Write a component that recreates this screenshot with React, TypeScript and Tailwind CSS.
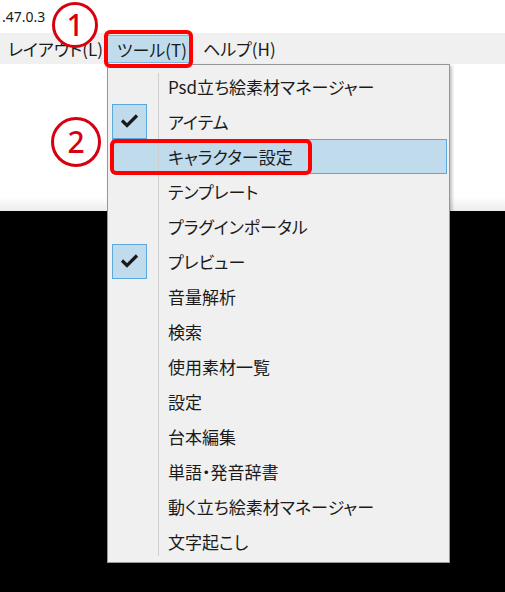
import * as React from "react";

/** Tool menu dropdown with red annotation marks (callouts 1 and 2). */

interface Item {
  label: string;
  checked?: boolean;
  hover?: boolean;
}

const items: Item[] = [
  { label: "Psd立ち絵素材マネージャー" },
  { label: "アイテム", checked: true },
  { label: "キャラクター設定", hover: true },
  { label: "テンプレート" },
  { label: "プラグインポータル" },
  { label: "プレビュー", checked: true },
  { label: "音量解析" },
  { label: "検索" },
  { label: "使用素材一覧" },
  { label: "設定" },
  { label: "台本編集" },
  { label: "単語・発音辞書" },
  { label: "動く立ち絵素材マネージャー" },
  { label: "文字起こし" },
];

function CheckMark() {
  return (
    <svg width="35" height="35" viewBox="0 0 35 35" className="block">
      <path d="M9 15.5 L14 20.5 L24 10.5" fill="none" stroke="#1a1a1a" strokeWidth="3.2" />
    </svg>
  );
}

function MenuRow({ item }: { item: Item }) {
  return (
    <li
      className={
        "relative flex h-[35px] items-center " +
        (item.hover ? "bg-[#c0dcec] outline outline-1 -outline-offset-1 outline-[#5aa8dc]" : "")
      }
    >
      <div
        className={
          "h-[35px] w-[35px] shrink-0 " +
          (item.checked ? "border border-[#5aa8dc] bg-[#c0dcec]" : "")
        }
      >
        {item.checked ? <CheckMark /> : null}
      </div>
      <span className="ml-[21px] whitespace-nowrap text-[17px] leading-none text-[#1b1b1b]">
        {item.label}
      </span>
    </li>
  );
}

export default function App() {
  return (
    <div className="relative h-[592px] w-[505px] overflow-hidden bg-black font-['Noto_Sans_CJK_JP',sans-serif] [font-feature-settings:'palt']">
      {/* window top: title remnant, menu bar, empty client area */}
      <div className="flex h-[211px] flex-col bg-white">
        <div className="flex h-[33px] items-center pl-[2px]">
          <span className="font-['Noto_Sans',sans-serif] text-[14px] leading-none text-[#1a1a1a]">.47.0.3</span>
        </div>
        <div className="flex h-[31px] items-stretch bg-[#f0f0f0] text-[17px] leading-none text-[#1b1b1b]">
          <div className="flex w-[107px] items-center pl-[8px] whitespace-nowrap">レイアウト(L)</div>
          <div className="my-[2px] mb-[1px] flex w-[84px] items-center border border-[#7fb9e2] bg-[#c0dcec] pl-[9px] whitespace-nowrap">
            ツール(T)
          </div>
          <div className="flex items-center pl-[12px] whitespace-nowrap">ヘルプ(H)</div>
        </div>
        <div className="flex-1" />
        <div className="h-[14px] bg-linear-to-b from-white to-[#ececec]" />
      </div>

      {/* dropdown */}
      <div className="absolute left-[107px] top-[64px] h-[499px] w-[343px] border border-[#979797] bg-[#f0f0f0] pb-[3px] pl-[4px] pr-[2px] pt-[4px] shadow-[2px_2px_3px_rgba(0,0,0,0.25)]">
        <ul className="relative">
          {items.map((it) => (
            <MenuRow key={it.label} item={it} />
          ))}
        </ul>
        <div className="pointer-events-none absolute bottom-[6px] left-[50px] top-[8px] w-px bg-[#cfcfcf]" />
      </div>

      {/* annotations */}
      <div className="absolute left-[104px] top-[30px] h-[38px] w-[89px] rounded-[6px] border-4 border-[#ff0000]" />
      <div className="absolute left-[110px] top-[139px] h-[36px] w-[202px] rounded-[6px] border-4 border-[#ff0000]" />
      <div className="absolute left-[52px] top-[2px] flex h-[46px] w-[46px] items-center justify-center rounded-full border-[3px] border-[#d6000f] bg-white">
        <span className="font-['Noto_Sans',sans-serif] text-[30px] font-medium leading-none text-[#d6000f]">1</span>
      </div>
      <div className="absolute left-[51px] top-[117px] flex h-[50px] w-[50px] items-center justify-center rounded-full border-[3px] border-[#d6000f] bg-white">
        <span className="font-['Noto_Sans',sans-serif] text-[30px] font-medium leading-none text-[#d6000f]">2</span>
      </div>
    </div>
  );
}
